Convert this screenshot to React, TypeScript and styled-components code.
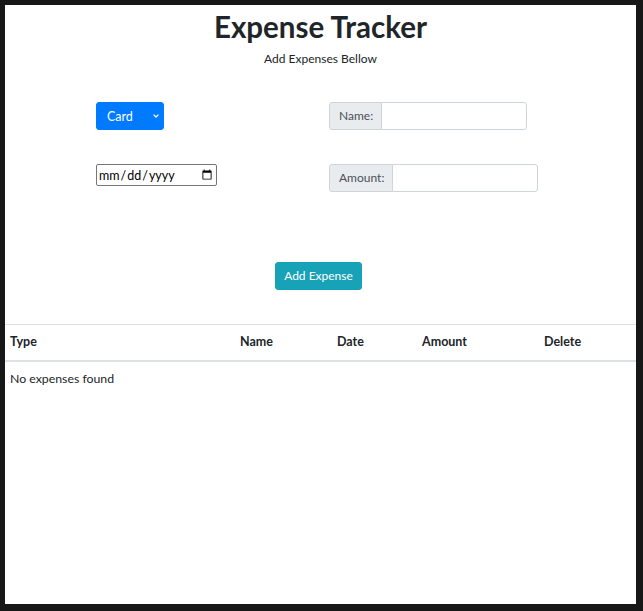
import React from "react";
import styled, { createGlobalStyle } from "styled-components";

const Global = createGlobalStyle`
  html, body { margin: 0; padding: 0; background: #171717; }
  body {
    font-family: "Segoe UI", Lato, "Open Sans", sans-serif;
    font-size: 12px;
    line-height: 1.5;
    color: #212529;
  }
  * { box-sizing: border-box; }
`;

const Frame = styled.div`
  height: 611px;
  padding: 5px 7px 7px 5px;
`;

const Panel = styled.div`
  background: #fff;
  height: 100%;
  display: flex;
  flex-direction: column;
`;

const Header = styled.header`
  text-align: center;
`;

const Title = styled.h1`
  margin: 4px 0 5px;
  font-size: 29.5px;
  font-weight: 700;
  line-height: 36px;
  color: #212529;
`;

const Subtitle = styled.p`
  margin: 0;
  font-size: 12px;
  line-height: 18px;
`;

const Form = styled.form`
  margin-top: 34px;
  padding-left: 91px;
  display: grid;
  grid-template-columns: 233px auto;
  row-gap: 34px;
  align-items: start;
`;

const SelectWrap = styled.div`
  position: relative;
  width: 68px;
  height: 28px;
`;

const Select = styled.select`
  appearance: none;
  -webkit-appearance: none;
  width: 100%;
  height: 100%;
  background: #007bff;
  color: #fff;
  border: 1px solid #007bff;
  border-radius: 3px;
  font-family: inherit;
  font-size: 12.5px;
  padding: 0 0 0 10px;
  outline: none;
`;

const Chevron = styled.svg`
  position: absolute;
  right: 5px;
  top: 12px;
  pointer-events: none;
`;

const DateInput = styled.input`
  width: 121px;
  height: 22px;
  margin: 0;
  padding: 1px 1px;
  border: 1px solid #767676;
  border-radius: 2px;
  font-family: "Segoe UI", Lato, sans-serif;
  font-size: 12.5px;
  color: #000;
  background: #fff;
`;

const InputGroup = styled.div`
  display: flex;
  height: 28px;
`;

const GroupLabel = styled.label`
  display: flex;
  align-items: center;
  padding: 0 8px 0 9px;
  background: #e9ecef;
  border: 1px solid #ced4da;
  border-radius: 3px 0 0 3px;
  color: #495057;
  font-size: 12px;
`;

const GroupInput = styled.input`
  width: 146px;
  height: 100%;
  margin-left: -1px;
  border: 1px solid #ced4da;
  border-radius: 0 3px 3px 0;
  padding: 0 9px;
  font-family: inherit;
  font-size: 12px;
  color: #495057;
  outline: none;
`;

const ButtonRow = styled.div`
  display: flex;
  justify-content: center;
  padding-right: 4px;
  margin-top: 70px;
`;

const Button = styled.button`
  height: 28px;
  padding: 0 8px;
  background: #17a2b8;
  border: 1px solid #17a2b8;
  border-radius: 3px;
  color: #fff;
  font-family: inherit;
  font-size: 12px;
  line-height: 18px;
`;

const Table = styled.div`
  margin-top: 34px;
`;

const Row = styled.div<{ $head?: boolean }>`
  display: grid;
  grid-template-columns: 230px 97px 85px 122px 1fr;
  padding: 8px 0 9px 5px;
  line-height: 18px;
  border-top: ${(p) => (p.$head ? "1px solid #dee2e6" : "none")};
  border-bottom: ${(p) => (p.$head ? "2px solid #dee2e6" : "none")};
`;

const HeadCell = styled.div`
  font-weight: 700;
  font-size: 12.5px;
`;

const EmptyCell = styled.div`
  grid-column: 1 / -1;
  font-size: 12.3px;
`;

export default function App() {
  return (
    <>
      <Global />
      <Frame>
        <Panel>
          <Header>
            <Title>Expense Tracker</Title>
            <Subtitle>Add Expenses Bellow</Subtitle>
          </Header>
          <Form onSubmit={(e) => e.preventDefault()}>
            <SelectWrap>
              <Select defaultValue="Card">
                <option>Card</option>
                <option>Cash</option>
              </Select>
              <Chevron width="6" height="4" viewBox="0 0 6 4">
                <path d="M0.6 0.6 L3 3 L5.4 0.6" fill="none" stroke="#fff" strokeWidth="1.3" />
              </Chevron>
            </SelectWrap>
            <InputGroup>
              <GroupLabel>Name:</GroupLabel>
              <GroupInput type="text" />
            </InputGroup>
            <div>
              <DateInput type="date" />
            </div>
            <InputGroup>
              <GroupLabel>Amount:</GroupLabel>
              <GroupInput type="number" />
            </InputGroup>
          </Form>
          <ButtonRow>
            <Button type="button">Add Expense</Button>
          </ButtonRow>
          <Table>
            <Row $head>
              <HeadCell>Type</HeadCell>
              <HeadCell>Name</HeadCell>
              <HeadCell>Date</HeadCell>
              <HeadCell>Amount</HeadCell>
              <HeadCell>Delete</HeadCell>
            </Row>
            <Row>
              <EmptyCell>No expenses found</EmptyCell>
            </Row>
          </Table>
        </Panel>
      </Frame>
    </>
  );
}
